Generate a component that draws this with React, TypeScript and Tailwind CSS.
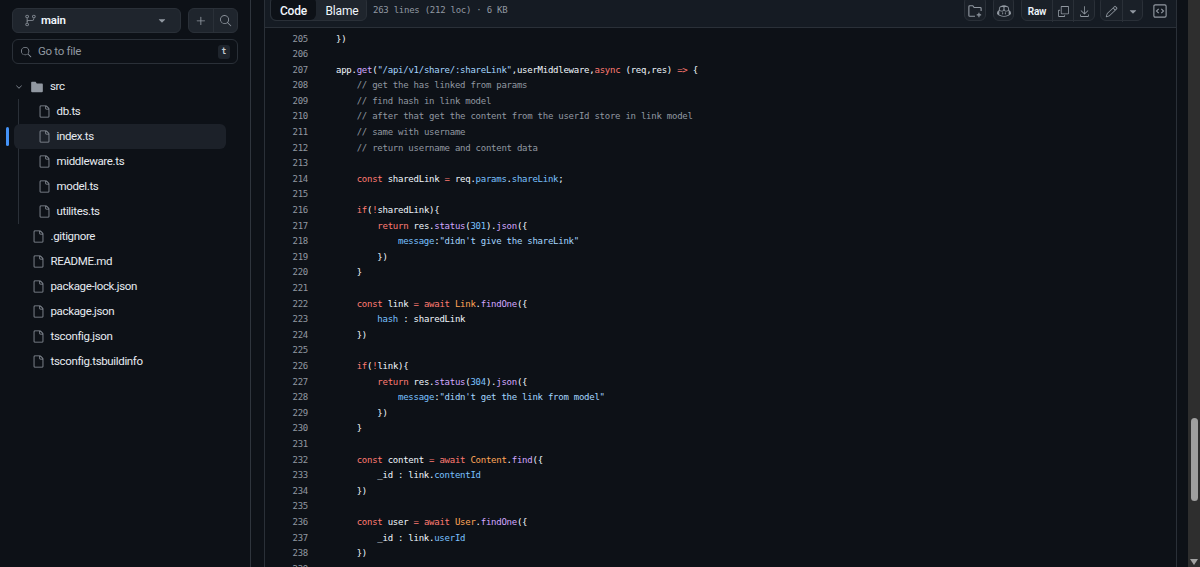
import { GoChevronDown, GoCopilot, GoCopy, GoDownload, GoFile, GoFileDirectoryFill, GoGitBranch, GoPencil, GoPlus, GoSearch, GoTriangleDown } from "react-icons/go"

type Tok = [string, string]

const K = "text-[#ff7b72]"
const F = "text-[#d2a8ff]"
const S = "text-[#a5d6ff]"
const C = "text-[#9198a1]"
const P = "text-[#79c0ff]"
const O = "text-[#ffa657]"
const B = "text-[#f0f6fc]"

const t = (s: string, c: string = B): Tok => [s, c]

const lines: Tok[][] = [
    [t("})")],
    [],
    [t("app."), t("get", F), t("("), t('"/api/v1/share/:shareLink"', S), t(",userMiddleware,"), t("async", K), t(" (req,res) "), t("=>", K), t(" {")],
    [t("    "), t("// get the has linked from params", C)],
    [t("    "), t("// find hash in link model", C)],
    [t("    "), t("// after that get the content from the userId store in link model", C)],
    [t("    "), t("// same with username", C)],
    [t("    "), t("// return username and content data", C)],
    [],
    [t("    "), t("const", K), t(" sharedLink "), t("=", K), t(" req."), t("params", P), t("."), t("shareLink", P), t(";")],
    [],
    [t("    "), t("if", K), t("("), t("!", K), t("sharedLink){")],
    [t("        "), t("return", K), t(" res."), t("status", F), t("("), t("301", P), t(")."), t("json", F), t("({")],
    [t("            "), t("message", P), t(":"), t(`"didn't give the shareLink"`, S)],
    [t("        })")],
    [t("    }")],
    [],
    [t("    "), t("const", K), t(" link "), t("=", K), t(" "), t("await", K), t(" "), t("Link", O), t("."), t("findOne", F), t("({")],
    [t("        "), t("hash", P), t(" : sharedLink")],
    [t("    })")],
    [],
    [t("    "), t("if", K), t("("), t("!", K), t("link){")],
    [t("        "), t("return", K), t(" res."), t("status", F), t("("), t("304", P), t(")."), t("json", F), t("({")],
    [t("            "), t("message", P), t(":"), t(`"didn't get the link from model"`, S)],
    [t("        })")],
    [t("    }")],
    [],
    [t("    "), t("const", K), t(" content "), t("=", K), t(" "), t("await", K), t(" "), t("Content", O), t("."), t("find", F), t("({")],
    [t("        _id : link."), t("contentId", P)],
    [t("    })")],
    [],
    [t("    "), t("const", K), t(" user "), t("=", K), t(" "), t("await", K), t(" "), t("User", O), t("."), t("findOne", F), t("({")],
    [t("        _id : link."), t("userId", P)],
    [t("    })")],
    [],
]

const FileRow = ({ name, active }: { name: string; active?: boolean }) => (
    <div className={active ? "relative -ml-[5px] flex h-[25px] w-[212px] items-center gap-[6px] rounded-md bg-[#1c2129] pl-[23.5px]" : "flex h-[25px] items-center gap-[6px] pl-[18.5px]"}>
        {active && <span className="absolute left-[-8px] top-[3px] h-[19px] w-[3px] rounded-full bg-[#4493f8]" />}
        <GoFile className="h-[13px] w-[13px] shrink-0 text-[#9198a1]" />
        <span className="text-[11.5px] tracking-[-0.35px] text-[#e6ebf1]">{name}</span>
    </div>
)

const Sidebar = () => (
    <aside className="flex w-[251px] shrink-0 flex-col border-r border-[#2f353d] px-3 pt-2 font-['Roboto',sans-serif]">
        <div className="flex gap-[7px]">
            <div className="flex h-[25px] w-[169px] items-center rounded-md border border-[#2a3038] bg-[#1f252d] pl-[11px] pr-[12px]">
                <GoGitBranch className="h-[13px] w-[13px] text-[#9198a1]" />
                <span className="ml-[4px] flex-1 text-[11.5px] font-semibold tracking-[-0.2px] text-[#f0f6fc]">main</span>
                <GoTriangleDown className="h-3 w-3 text-[#9198a1]" />
            </div>
            <div className="flex h-[25px] w-[50px] rounded-md border border-[#2a3038] bg-[#1f252d]">
                <div className="flex flex-1 items-center justify-center border-r border-[#2a3038]">
                    <GoPlus className="h-[14px] w-[14px] text-[#9198a1]" />
                </div>
                <div className="flex flex-1 items-center justify-center">
                    <GoSearch className="h-[13px] w-[13px] text-[#9198a1]" />
                </div>
            </div>
        </div>
        <div className="mt-[6px] flex h-[25px] w-[226px] items-center rounded-md border border-[#2a3038] pl-[7px] pr-[7px]">
            <GoSearch className="h-3 w-3 text-[#9198a1]" />
            <span className="ml-[6px] flex-1 text-[11.5px] tracking-[-0.3px] text-[#9198a1]">Go to file</span>
            <span className="flex h-[14px] w-[12px] items-center justify-center rounded-[3px] bg-[#1f252d] font-['DejaVu_Sans_Mono',monospace] text-[8px] font-bold text-[#c5ccd4]">t</span>
        </div>
        <div className="mt-[10px]">
            <div className="flex h-[25px] items-center">
                <GoChevronDown className="ml-[2px] h-[10px] w-[10px] text-[#9198a1]" />
                <GoFileDirectoryFill className="ml-[6px] h-[14px] w-[14px] text-[#9198a1]" />
                <span className="ml-[6px] text-[11.5px] tracking-[-0.35px] text-[#e6ebf1]">src</span>
            </div>
            <div className="ml-[6px] border-l border-[#2a3038]">
                <FileRow name="db.ts" />
                <FileRow name="index.ts" active />
                <FileRow name="middleware.ts" />
                <FileRow name="model.ts" />
                <FileRow name="utilites.ts" />
            </div>
            {[".gitignore", "README.md", "package-lock.json", "package.json", "tsconfig.json", "tsconfig.tsbuildinfo"].map((n) => (
                <div key={n} className="flex h-[25px] items-center gap-[6px] pl-[19.5px]">
                    <GoFile className="h-[13px] w-[13px] shrink-0 text-[#9198a1]" />
                    <span className="text-[11.5px] tracking-[-0.35px] text-[#e6ebf1]">{n}</span>
                </div>
            ))}
        </div>
    </aside>
)

const ToolBtn = ({ children, className = "" }: { children: React.ReactNode; className?: string }) => (
    <div className={`flex h-[25px] items-center justify-center text-[#9198a1] ${className}`}>{children}</div>
)

const Toolbar = () => (
    <div className="flex h-[28px] shrink-0 items-end overflow-hidden border-b border-[#2a3038] bg-[#151b23] pb-[6px] pl-[5px] pr-[7px]">
        <div className="flex h-[25px] w-[97px] rounded-md border border-[#2a3038] bg-[#1f252d] font-['Roboto',sans-serif] text-[12px] tracking-[-0.2px] text-[#f0f6fc]">
            <div className="flex w-[45px] items-center justify-center rounded-md bg-[#0d1117] pt-[4px] font-medium">Code</div>
            <div className="flex flex-1 items-center justify-center pl-[2px] pt-[4px]">Blame</div>
        </div>
        <span className="ml-[6px] self-center font-['DejaVu_Sans_Mono',monospace] text-[9px] tracking-[-0.25px] text-[#9198a1]">263 lines (212 loc) · 6 KB</span>
        <div className="ml-auto flex items-end">
            <ToolBtn className="w-[22px] rounded-md border border-[#2a3038] bg-[#1a2028]">
                <svg viewBox="0 0 16 16" className="mt-[4px] h-[14px] w-[14px]" fill="none" stroke="currentColor" strokeWidth="1.3">
                    <path d="M8 14H2a1 1 0 0 1-1-1V3a1 1 0 0 1 1-1h3.5l1.5 2h7a1 1 0 0 1 1 1v3" />
                    <path d="M12.5 10v5M10 12.5h5" />
                </svg>
            </ToolBtn>
            <ToolBtn className="ml-[7px] w-[21px] rounded-md border border-[#2a3038] bg-[#1a2028]">
                <GoCopilot className="mt-[4px] h-[14px] w-[14px]" />
            </ToolBtn>
            <div className="ml-[7px] flex h-[25px] w-[74px] rounded-md border border-[#2a3038] bg-[#1a2028]">
                <ToolBtn className="w-[31px] border-r border-[#2a3038] pt-[4px] font-['Roboto',sans-serif] text-[10px] font-semibold tracking-[-0.2px] !text-[#f0f6fc]">Raw</ToolBtn>
                <ToolBtn className="w-[21px] border-r border-[#2a3038] pt-[4px]"><GoCopy className="h-[13px] w-[13px]" /></ToolBtn>
                <ToolBtn className="flex-1 pt-[4px]"><GoDownload className="h-[13px] w-[13px]" /></ToolBtn>
            </div>
            <div className="ml-[5px] flex h-[25px] w-[43px] rounded-md border border-[#2a3038] bg-[#1a2028]">
                <ToolBtn className="w-[22px] border-r border-[#2a3038] pt-[4px]"><GoPencil className="h-[13px] w-[13px]" /></ToolBtn>
                <ToolBtn className="flex-1 pt-[4px]"><GoTriangleDown className="h-3 w-3" /></ToolBtn>
            </div>
            <ToolBtn className="ml-[8px] w-[18px] pt-[4px]">
                <svg viewBox="0 0 16 16" className="h-[14px] w-[14px]" fill="none" stroke="currentColor" strokeWidth="1.3">
                    <rect x="1" y="1" width="14" height="14" rx="1.5" />
                    <path d="M6.5 5.5 4 8l2.5 2.5M9.5 5.5 12 8l-2.5 2.5" />
                </svg>
            </ToolBtn>
        </div>
    </div>
)

const CodeView = () => (
    <div className="min-h-0 flex-1 overflow-hidden pt-[3.5px] font-['DejaVu_Sans_Mono',monospace] text-[9px] leading-[15.6px] tracking-[-0.25px]">
        {lines.map((toks, i) => (
            <div key={i} className="flex h-[15.6px]">
                <span className="w-[43px] shrink-0 text-right text-[#9198a1]">{205 + i}</span>
                <span className="ml-[28px] whitespace-pre">
                    {toks.map(([s, c], j) => (
                        <span key={j} className={c}>{s}</span>
                    ))}
                </span>
            </div>
        ))}
    </div>
)

const Scrollbar = () => (
    <div className="relative w-[12px] shrink-0 bg-[#2e2e2e]">
        <div className="absolute left-[3px] top-[418px] h-[83px] w-[7px] rounded-full bg-[#9f9f9f]" />
        <div className="absolute bottom-[2px] left-[2px] h-0 w-0 border-x-[4px] border-t-[6px] border-x-transparent border-t-[#a3a3a3]" />
    </div>
)

export default function App() {
    return (
        <div className="flex h-[567px] w-[1200px] overflow-hidden bg-[#0d1117]">
            <Sidebar />
            <div className="ml-[13px] flex w-[913px] shrink-0 flex-col border-x border-[#2a3038]">
                <Toolbar />
                <CodeView />
            </div>
            <div className="flex-1" />
            <Scrollbar />
        </div>
    )
}
